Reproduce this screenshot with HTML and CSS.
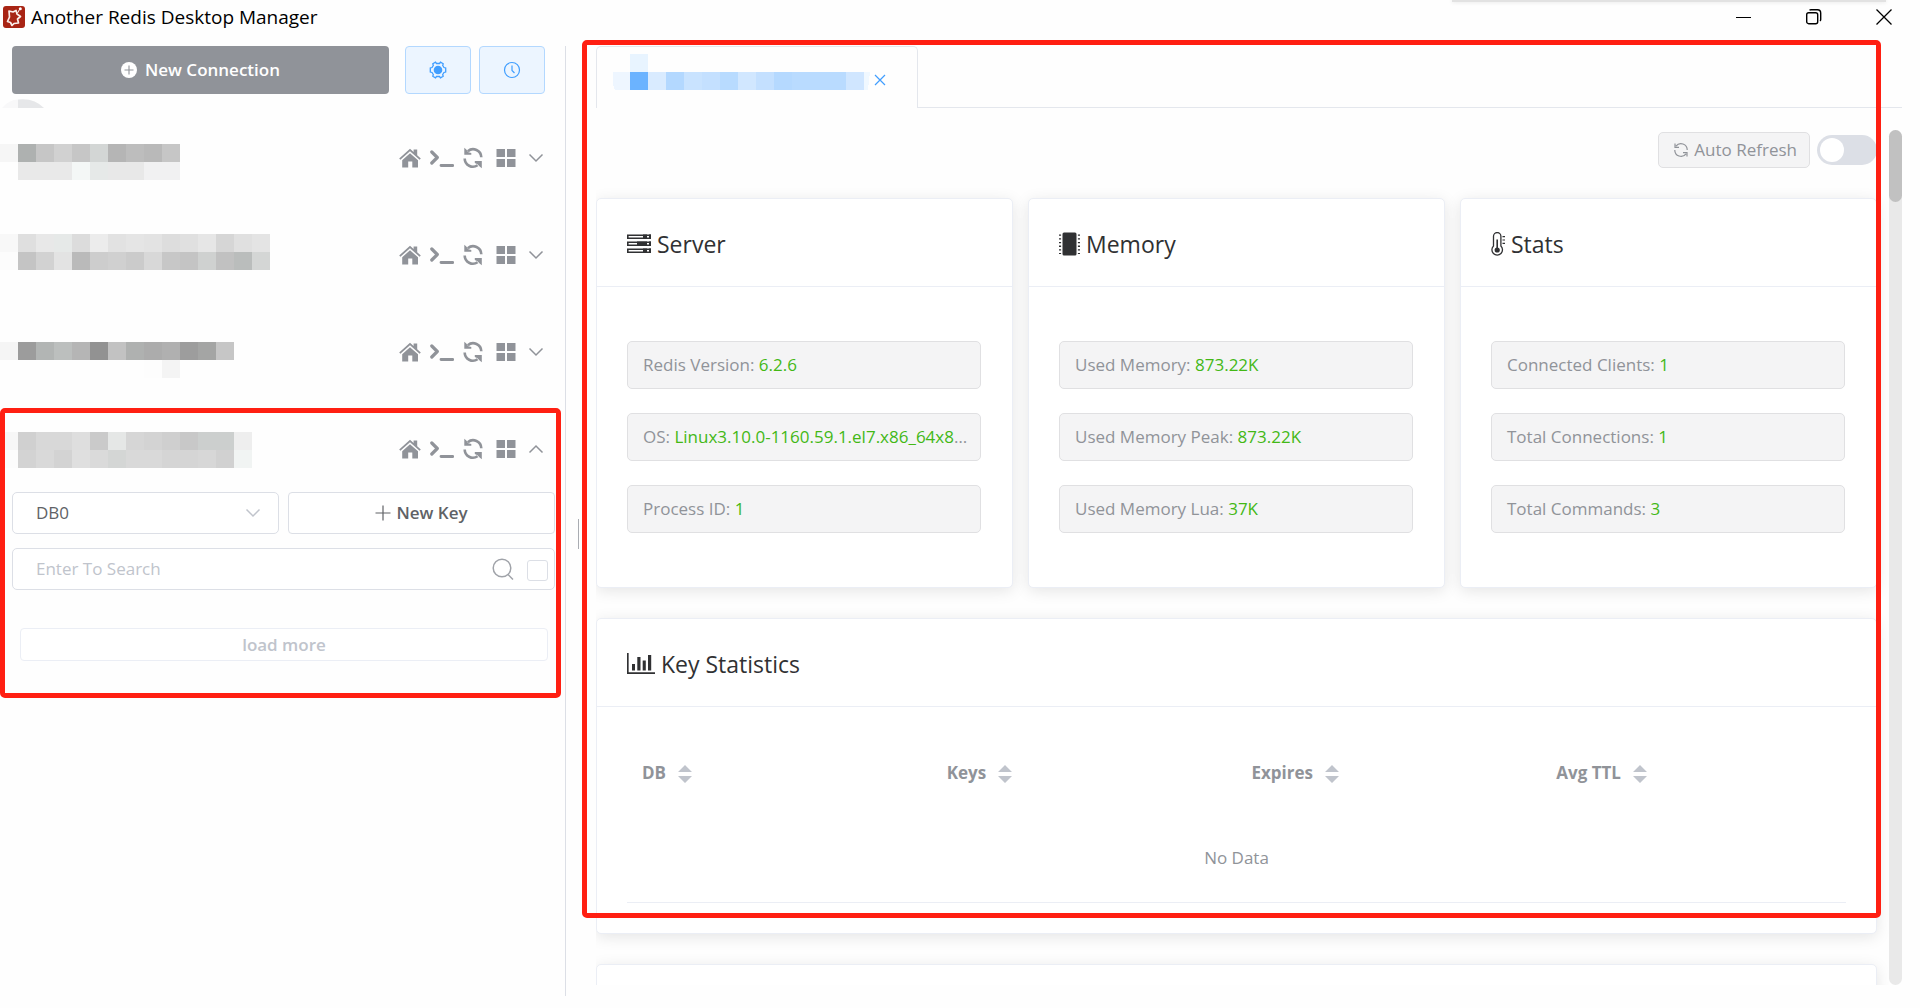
FILE: index.html
```html
<!DOCTYPE html>
<html lang="en">
<head>
<meta charset="utf-8">
<title>Another Redis Desktop Manager</title>
<link rel="stylesheet" href="styles.css">
</head>
<body>
<svg class="sprite" aria-hidden="true">
  <symbol id="i-home" viewBox="0 0 22 20">
    <path d="M11 .8 14.6 4V1.4h3.6v5.8l3.6 3.3-1.2 1.3L11 3.2 1.4 11.8.2 10.500z"/>
    <path d="M11 5.200 19 12.300V19.500H13.300V13.400H9.200V19.500H3.200V12.300z"/>
  </symbol>
  <symbol id="i-terminal" viewBox="0 0 24 20">
    <path d="M1.800 4 7.300 9.500 1.800 15" fill="none" stroke="currentColor" stroke-width="3.200" stroke-linecap="round" stroke-linejoin="round"/>
    <path d="M11 17.500H22.700" stroke="currentColor" stroke-width="2.800" stroke-linecap="round"/>
  </symbol>
  <symbol id="i-sync" viewBox="0 0 20 22">
    <g fill="none" stroke="currentColor" stroke-width="2.600">
      <path d="M4.800 4.200A8.200 8.200 0 0 1 18.300 10.300"/>
      <path d="M1.700 11.500A8.200 8.200 0 0 0 14.600 18.200"/>
    </g>
    <path d="M1.300.8V7.800H8.300V6L5.300 5.300 3.300 2.500zM18.800 21.300V14H11.800V16L14.500 17.300 16.600 19.500z"/>
  </symbol>
  <symbol id="i-grid" viewBox="0 0 20 20">
    <path d="M.5 1H9v8H.5zM11 1h8.500v8H11zM.5 11H9v8H.5zM11 11h8.500v8H11z"/>
  </symbol>
  <symbol id="i-down" viewBox="0 0 16 10">
    <path d="M1.500 1.500 8 8 14.500 1.500" fill="none" stroke="currentColor" stroke-width="1.500"/>
  </symbol>
  <symbol id="i-refresh" viewBox="0 0 16 16">
    <path d="M3 4.200A6.200 6.200 0 0 1 14.200 8M13 11.800A6.200 6.200 0 0 1 1.800 8M2 1.500V5.300H6M14 14.500V10.700H10" fill="none" stroke="currentColor" stroke-width="1.200"/>
  </symbol>
  <symbol id="i-sort" viewBox="0 0 14 18">
    <path d="M7 0 14 7H0zM7 18 0 11H14z"/>
  </symbol>
</svg>

<div class="app">
  <header class="titlebar">
    <svg class="logo" viewBox="0 0 22 22" aria-hidden="true">
      <rect width="22" height="22" rx="3" fill="#a82414"/>
      <path d="M6 5 10 6 13 4.500 14 8 17.500 10.500 14.500 13 15.500 17 11 17.500 9 19.500 7.500 16.500 4.500 15.500 6.500 11z" fill="none" stroke="#fbeeea" stroke-width="1.700" stroke-linejoin="round"/>
      <path d="M16.500 3.500 14.500 7" stroke="#fff" stroke-width="1"/>
      <circle cx="17.300" cy="2.800" r="1.500" fill="#fff"/>
    </svg>
    <h1 class="app-name">Another Redis Desktop Manager</h1>
    <div class="window-controls">
      <button type="button" aria-label="Minimize"><svg width="16" height="16" viewBox="0 0 16 16"><path d="M0 8.500H15" stroke="#000"/></svg></button>
      <button type="button" aria-label="Restore"><svg width="16" height="16" viewBox="0 0 16 16"><g fill="none" stroke="#000" stroke-width="1.400"><rect x=".7" y="3.700" width="11" height="11" rx="2"/><path d="M3.500 1.200C4 .8 4.500.7 5 .7h6.500a3.200 3.200 0 0 1 3.200 3.200V10.500c0 .6-.2 1.100-.6 1.500"/></g></svg></button>
      <button type="button" aria-label="Close"><svg width="16" height="16" viewBox="0 0 16 16"><path d="M.5.5l15 15M15.500.5l-15 15" stroke="#000" stroke-width="1.300"/></svg></button>
    </div>
    <span class="edge-shadow"></span>
  </header>

  <div class="workspace">
    <aside class="sidebar">
      <div class="toolbar">
        <button type="button" class="btn-connect">
          <svg width="16" height="16" viewBox="0 0 16 16"><circle cx="8" cy="8" r="8" fill="#fff"/><path d="M8 3.500v9M3.500 8h9" stroke="#909399" stroke-width="1.100"/></svg>
          New Connection
        </button>
        <button type="button" class="btn-tool" aria-label="Settings">
          <svg width="18" height="18" viewBox="0 0 18 18"><path d="M6.500 1.200 7.500 2.500h3l1-1.300 2.700 1.500-.5 1.800 1.300 2 1.700.5v4l-1.700.5-1.300 2 .5 1.800-2.700 1.500-1-1.300h-3l-1 1.300-2.700-1.500.5-1.800-1.300-2L1.300 11V7L3 6.500l1.300-2-.5-1.800z" fill="none" stroke="currentColor" stroke-width="1.300"/><circle cx="9" cy="9" r="4.300" fill="currentColor"/></svg>
        </button>
        <button type="button" class="btn-tool" aria-label="Command log">
          <svg width="18" height="18" viewBox="0 0 18 18"><g fill="none" stroke="currentColor" stroke-width="1.200"><circle cx="9" cy="9" r="7.500"/><path d="M9 4.500V9.500L11.500 12"/></g></svg>
        </button>
      </div>
      <svg class="peek" width="48" height="9" viewBox="0 0 48 9" aria-hidden="true">
        <path d="M2 9Q9 .5 18 .5V9z" fill="#f8f8f9"/><path d="M18 .5Q34-1.500 44 9H18z" fill="#e6e7e9"/>
      </svg>

      <ul class="connections">
        <li class="connection">
          <div class="conn-row">
            <svg class="mosaic" width="270" height="97" shape-rendering="crispEdges" aria-hidden="true">
              <path fill="#f6f6f6" d="M0 35h18v18H0z"/><path fill="#aeb1b0" d="M18 35h18v18H18z"/><path fill="#c6c6c6" d="M36 35h18v18H36z"/><path fill="#d1d1d1" d="M54 35h18v18H54z"/><path fill="#c6c6c6" d="M72 35h18v18H72z"/><path fill="#d3d6d5" d="M90 35h18v18H90z"/><path fill="#b5b5b5" d="M108 35h18v18h-18z"/><path fill="#bdbdbd" d="M126 35h18v18h-18z"/><path fill="#b9b9b9" d="M144 35h18v18h-18z"/><path fill="#c6c6c6" d="M162 35h18v18h-18z"/>
              <path fill="#e9e9e9" d="M18 53h54v18H18z"/><path fill="#f4f7f6" d="M72 53h18v18H72z"/><path fill="#e6e9e8" d="M90 53h18v18H90z"/><path fill="#e8e8e8" d="M108 53h36v18h-36z"/><path fill="#f1f1f2" d="M144 53h36v18h-36z"/>
            </svg>
            <div class="actions">
              <button type="button" aria-label="Home"><svg width="22" height="20"><use href="#i-home"/></svg></button>
              <button type="button" aria-label="Console"><svg width="24" height="20"><use href="#i-terminal"/></svg></button>
              <button type="button" aria-label="Refresh"><svg width="20" height="22"><use href="#i-sync"/></svg></button>
              <button type="button" aria-label="Menu"><svg width="20" height="20"><use href="#i-grid"/></svg></button>
              <button type="button" aria-label="Expand"><svg width="16" height="10"><use href="#i-down"/></svg></button>
            </div>
          </div>
        </li>
        <li class="connection">
          <div class="conn-row">
            <svg class="mosaic" width="270" height="97" shape-rendering="crispEdges" aria-hidden="true">
              <path fill="#f8f8f8" d="M0 28h18v18H0z"/><path fill="#dfdfdf" d="M18 28h18v18H18z"/><path fill="#e8e8e8" d="M36 28h18v18H36z"/><path fill="#e6e9e8" d="M54 28h18v18H54z"/><path fill="#dcdcdc" d="M72 28h18v18H72z"/><path fill="#ececec" d="M90 28h18v18H90z"/><path fill="#e2e2e2" d="M108 28h18v18h-18z"/><path fill="#e5e5e5" d="M126 28h18v18h-18z"/><path fill="#e3e3e3" d="M144 28h18v18h-18z"/><path fill="#dddddd" d="M162 28h18v18h-18z"/><path fill="#e0e0e0" d="M180 28h18v18h-18z"/><path fill="#e6e6e6" d="M198 28h18v18h-18z"/><path fill="#d6d6d6" d="M216 28h18v18h-18z"/><path fill="#e0e0e0" d="M234 28h18v18h-18z"/><path fill="#e4e4e4" d="M252 28h18v18h-18z"/>
              <path fill="#fcfcfc" d="M0 46h18v18H0z"/><path fill="#c4c4c4" d="M18 46h18v18H18z"/><path fill="#d2d2d2" d="M36 46h18v18H36z"/><path fill="#e3e3e3" d="M54 46h18v18H54z"/><path fill="#bababa" d="M72 46h18v18H72z"/><path fill="#cdcdcd" d="M90 46h18v18H90z"/><path fill="#d0d0d0" d="M108 46h18v18h-18z"/><path fill="#cbcbcb" d="M126 46h18v18h-18z"/><path fill="#d8d8d8" d="M144 46h18v18h-18z"/><path fill="#c7c7c7" d="M162 46h18v18h-18z"/><path fill="#c4c4c4" d="M180 46h18v18h-18z"/><path fill="#cfd1d0" d="M198 46h18v18h-18z"/><path fill="#c1c1c1" d="M216 46h18v18h-18z"/><path fill="#babdbc" d="M234 46h18v18h-18z"/><path fill="#d4d6d5" d="M252 46h18v18h-18z"/>
            </svg>
            <div class="actions">
              <button type="button" aria-label="Home"><svg width="22" height="20"><use href="#i-home"/></svg></button>
              <button type="button" aria-label="Console"><svg width="24" height="20"><use href="#i-terminal"/></svg></button>
              <button type="button" aria-label="Refresh"><svg width="20" height="22"><use href="#i-sync"/></svg></button>
              <button type="button" aria-label="Menu"><svg width="20" height="20"><use href="#i-grid"/></svg></button>
              <button type="button" aria-label="Expand"><svg width="16" height="10"><use href="#i-down"/></svg></button>
            </div>
          </div>
        </li>
        <li class="connection">
          <div class="conn-row">
            <svg class="mosaic" width="270" height="97" shape-rendering="crispEdges" aria-hidden="true">
              <path fill="#f5f5f5" d="M0 39h18v18H0z"/><path fill="#9c9c9c" d="M18 39h18v18H18z"/><path fill="#b2b5b4" d="M36 39h18v18H36z"/><path fill="#bcbfbe" d="M54 39h18v18H54z"/><path fill="#b5b5b5" d="M72 39h18v18H72z"/><path fill="#929292" d="M90 39h18v18H90z"/><path fill="#c2c2c2" d="M108 39h18v18h-18z"/><path fill="#afb1b0" d="M126 39h18v18h-18z"/><path fill="#acacac" d="M144 39h18v18h-18z"/><path fill="#b0b0b0" d="M162 39h18v18h-18z"/><path fill="#9d9d9d" d="M180 39h18v18h-18z"/><path fill="#a4a5a4" d="M198 39h18v18h-18z"/><path fill="#c6c6c6" d="M216 39h18v18h-18z"/>
              <path fill="#fdfdfd" d="M144 57h18v18h-18z"/><path fill="#f4f4f4" d="M162 57h18v18h-18z"/>
            </svg>
            <div class="actions">
              <button type="button" aria-label="Home"><svg width="22" height="20"><use href="#i-home"/></svg></button>
              <button type="button" aria-label="Console"><svg width="24" height="20"><use href="#i-terminal"/></svg></button>
              <button type="button" aria-label="Refresh"><svg width="20" height="22"><use href="#i-sync"/></svg></button>
              <button type="button" aria-label="Menu"><svg width="20" height="20"><use href="#i-grid"/></svg></button>
              <button type="button" aria-label="Expand"><svg width="16" height="10"><use href="#i-down"/></svg></button>
            </div>
          </div>
        </li>
        <li class="connection is-open">
          <div class="conn-row">
            <svg class="mosaic" width="270" height="97" shape-rendering="crispEdges" aria-hidden="true">
              <path fill="#f7f7f7" d="M0 32h18v18H0z"/><path fill="#d0d0d0" d="M18 32h18v18H18z"/><path fill="#d8d8d8" d="M36 32h36v18H36z"/><path fill="#dedede" d="M72 32h18v18H72z"/><path fill="#cacaca" d="M90 32h18v18H90z"/><path fill="#e5e7e6" d="M108 32h18v18h-18z"/><path fill="#d6d6d6" d="M126 32h18v18h-18z"/><path fill="#d3d3d3" d="M144 32h18v18h-18z"/><path fill="#cfcfcf" d="M162 32h18v18h-18z"/><path fill="#c8c8c8" d="M180 32h18v18h-18z"/><path fill="#cccfce" d="M198 32h36v18h-36z"/><path fill="#eeeeee" d="M234 32h18v18h-18z"/>
              <path fill="#fcfcfc" d="M0 50h18v18H0z"/><path fill="#d3d3d3" d="M18 50h18v18H18z"/><path fill="#d9d9d9" d="M36 50h18v18H36z"/><path fill="#d3d3d3" d="M54 50h18v18H54z"/><path fill="#dfdfdf" d="M72 50h18v18H72z"/><path fill="#dadada" d="M90 50h18v18H90z"/><path fill="#d4d6d5" d="M108 50h18v18h-18z"/><path fill="#d9d9d9" d="M126 50h36v18h-36z"/><path fill="#d5d5d5" d="M162 50h36v18h-36z"/><path fill="#d7d7d7" d="M198 50h18v18h-18z"/><path fill="#d1d1d1" d="M216 50h18v18h-18z"/><path fill="#f1f4f3" d="M234 50h18v18h-18z"/>
            </svg>
            <div class="actions">
              <button type="button" aria-label="Home"><svg width="22" height="20"><use href="#i-home"/></svg></button>
              <button type="button" aria-label="Console"><svg width="24" height="20"><use href="#i-terminal"/></svg></button>
              <button type="button" aria-label="Refresh"><svg width="20" height="22"><use href="#i-sync"/></svg></button>
              <button type="button" aria-label="Menu"><svg width="20" height="20"><use href="#i-grid"/></svg></button>
              <button type="button" aria-label="Collapse"><svg class="flip" width="16" height="10"><use href="#i-down"/></svg></button>
            </div>
          </div>
          <div class="conn-body">
            <div class="db-row">
              <div class="select-wrap">
                <select aria-label="Database"><option>DB0</option></select>
                <svg width="16" height="10" aria-hidden="true"><use href="#i-down"/></svg>
              </div>
              <button type="button" class="btn-key"><svg width="16" height="16" viewBox="0 0 16 16"><path d="M8 .5v15M.5 8h15" stroke="#606266" stroke-width="1.200"/></svg>New Key</button>
            </div>
            <div class="search">
              <input type="text" placeholder="Enter To Search" aria-label="Search keys">
              <svg width="22" height="22" viewBox="0 0 22 22" aria-hidden="true"><g fill="none" stroke="#a0a3a9" stroke-width="1.500"><circle cx="10" cy="10" r="8.800"/><path d="M16 16.500 21 21.500"/></g></svg>
              <input type="checkbox" aria-label="Exact search">
            </div>
            <button type="button" class="btn-more" disabled>load more</button>
          </div>
          <span class="mark"></span>
        </li>
      </ul>
    </aside>

    <main class="main">
      <span class="resizer"></span>
      <nav class="tabs">
        <div class="tab">
          <svg width="258" height="61" viewBox="0 1 258 61" shape-rendering="crispEdges" aria-hidden="true">
            <path fill="#e8f4ff" d="M17 8h18v18H17z"/>
            <path fill="#eef6ff" d="M0 26h17v18H2L0 38z"/><path fill="#6bb3ff" d="M17 26h18v18H17z"/><path fill="#d9ebff" d="M35 26h18v18H35z"/><path fill="#b3d8ff" d="M53 26h18v18H53z"/><path fill="#c9e3ff" d="M71 26h18v18H71z"/><path fill="#c4e0ff" d="M89 26h18v18H89z"/><path fill="#b8dbff" d="M107 26h18v18h-18z"/><path fill="#d1e7ff" d="M125 26h18v18h-18z"/><path fill="#c4e0ff" d="M143 26h18v18h-18z"/><path fill="#b5d9ff" d="M161 26h18v18h-18z"/><path fill="#b9dbff" d="M179 26h54v18h-54z"/><path fill="#d0e6ff" d="M233 26h18v18h-18z"/><path fill="#f0f8ff" d="M251 26h6l-2 18h-4z"/>
          </svg>
          <button type="button" aria-label="Close tab"><svg width="12" height="12" viewBox="0 0 12 12"><path d="M1 1l10 10M11 1 1 11" stroke="currentColor" stroke-width="1.200"/></svg></button>
        </div>
        <div class="tabs-rest"></div>
      </nav>

      <div class="content">
        <div class="scroll">
          <div class="refresh-bar">
            <label class="refresh-tag" for="auto"><svg width="16" height="16"><use href="#i-refresh"/></svg>Auto Refresh</label>
            <input id="auto" class="switch" type="checkbox" role="switch">
          </div>

          <div class="cards">
            <section class="card">
              <h2><svg width="24" height="20" viewBox="0 0 24 20"><g fill="none" stroke="currentColor" stroke-width="1.600"><path d="M.8 1.300h22.400v3H.8zM.8 8.300h22.400v3H.8zM.8 15.300h22.400v3H.8z"/></g><path d="M16 .5h4v4.500h-4zM22 .5h2v4.500h-2zM10 7.500h10V12H10zM22 7.500h2V12h-2zM16 14.500h4V19h-4zM22 14.500h2V19h-2z"/></svg>Server</h2>
              <div class="card-body">
                <p class="tag">Redis Version: <span>6.2.6</span></p>
                <p class="tag">OS: <span>Linux3.10.0-1160.59.1.el7.x86_64x86_64</span></p>
                <p class="tag">Process ID: <span>1</span></p>
              </div>
            </section>
            <section class="card">
              <h2><svg width="21" height="24" viewBox="0 0 21 24"><rect x="3.500" y=".5" width="14" height="23" rx="1.500"/><path d="M1 2.500V22M20 2.500V22" stroke="currentColor" stroke-width="2.200" stroke-dasharray="1.300 2.400"/></svg>Memory</h2>
              <div class="card-body">
                <p class="tag">Used Memory: <span>873.22K</span></p>
                <p class="tag">Used Memory Peak: <span>873.22K</span></p>
                <p class="tag">Used Memory Lua: <span>37K</span></p>
              </div>
            </section>
            <section class="card">
              <h2><svg width="14" height="24" viewBox="0 0 14 24"><path d="M2.500 14V4.200a3.700 3.700 0 0 1 7.400 0V14a5.300 5.300 0 1 1-7.400 0z" fill="none" stroke="currentColor" stroke-width="1.300"/><circle cx="6.200" cy="18" r="2.600"/><path d="M6.200 7.500V18" stroke="currentColor" stroke-width="1.600"/><path d="M11.500 4.700H14M11.500 8H14M11.500 11.300H14" stroke="currentColor" stroke-width="1.200"/></svg>Stats</h2>
              <div class="card-body">
                <p class="tag">Connected Clients: <span>1</span></p>
                <p class="tag">Total Connections: <span>1</span></p>
                <p class="tag">Total Commands: <span>3</span></p>
              </div>
            </section>
          </div>

          <section class="card">
            <h2><svg width="28" height="22" viewBox="0 0 28 22"><path d="M.8 0V20.200H28" fill="none" stroke="currentColor" stroke-width="1.700"/><path d="M5 11h3v6.500H5zM10.300 4h3.200v13.500h-3.200zM15.700 7.500h3.100v10h-3.100zM21 2h3.200v15.500H21z"/></svg>Key Statistics</h2>
            <div class="table-wrap">
              <table>
                <thead>
                  <tr>
                    <th scope="col">DB<svg width="14" height="18"><use href="#i-sort"/></svg></th>
                    <th scope="col">Keys<svg width="14" height="18"><use href="#i-sort"/></svg></th>
                    <th scope="col">Expires<svg width="14" height="18"><use href="#i-sort"/></svg></th>
                    <th scope="col">Avg TTL<svg width="14" height="18"><use href="#i-sort"/></svg></th>
                  </tr>
                </thead>
                <tbody>
                  <tr><td colspan="4">No Data</td></tr>
                </tbody>
              </table>
            </div>
          </section>

          <section class="card card-next"></section>
        </div>
        <div class="scrollbar"><div class="thumb"></div></div>
      </div>
      <span class="mark"></span>
    </main>
  </div>
</div>
</body>
</html>
```
FILE: styles.css
```css
* { box-sizing: border-box; }

body {
  margin: 0;
  background: #fefefe;
  color: #303133;
  font: 17px/24px "Open Sans", "Noto Sans", sans-serif;
}

button, input, select { font: inherit; color: inherit; }
button { margin: 0; padding: 0; border: 0; background: none; }
svg { display: block; flex: none; fill: currentColor; }
h1, h2, p, ul { margin: 0; padding: 0; }
.sprite { position: absolute; width: 0; height: 0; }

.app { display: flex; flex-direction: column; height: 100vh; overflow: hidden; }

/* window title bar */
.titlebar { position: relative; display: flex; align-items: center; gap: 6px; height: 34px; padding: 0 28px 0 3px; margin-bottom: 12px; }
.logo { width: 22px; height: 22px; }
.app-name { flex: 1; font-size: 19px; font-weight: 400; color: #000; }
.window-controls { display: flex; gap: 54px; }
.edge-shadow { position: absolute; top: 0; right: 34px; width: 434px; height: 2px; background: #e2e2e2; box-shadow: 0 0 4px #dcdcdc; }

.workspace { display: flex; flex: 1; min-height: 0; }

/* sidebar */
.sidebar { width: 566px; flex: none; margin-bottom: 12px; border-right: 1px solid #dcdfe6; }
.toolbar { display: flex; gap: 8px; padding: 0 20px 0 12px; }
.btn-connect { display: flex; flex: 1; align-items: center; justify-content: center; gap: 8px; height: 48px; margin-right: 8px; border-radius: 4px; background: #909399; color: #fff; font-weight: 600; }
.btn-tool { display: flex; align-items: center; justify-content: center; width: 66px; height: 48px; border: 1px solid #b3d8ff; border-radius: 4px; background: #ecf5ff; color: #409eff; }
.peek { margin: 5px 0 1px; }

.connections { list-style: none; }
.connection { position: relative; }
.conn-row { display: flex; align-items: center; justify-content: space-between; height: 97px; padding-right: 21px; color: #909399; }
.actions { display: flex; align-items: center; }
.actions button + button { margin-left: 9px; }
.actions button:nth-child(4) { margin-left: 13px; }
.actions button:nth-child(5) { margin-left: 12px; }
.flip { transform: rotate(180deg); }

.conn-body { padding: 0 10px 37px 12px; margin-top: -5px; }
.db-row { display: grid; grid-template-columns: 1fr 1fr; gap: 9px; }
.select-wrap { position: relative; color: #c0c4cc; }
.select-wrap select { width: 100%; height: 42px; padding: 0 23px; border: 1px solid #dcdfe6; border-radius: 5px; background: #fff; color: #606266; appearance: none; }
.select-wrap svg { position: absolute; top: 16px; right: 18px; pointer-events: none; }
.btn-key { display: flex; align-items: center; justify-content: center; gap: 5px; height: 42px; border: 1px solid #dcdfe6; border-radius: 4px; background: #fff; color: #606266; font-weight: 600; }
.search { display: flex; align-items: center; height: 42px; margin-top: 14px; padding: 0 6px 0 23px; border: 1px solid #dcdfe6; border-radius: 5px; background: #fff; }
.search input[type="text"] { flex: 1; min-width: 0; padding: 0; border: 0; background: none; outline: none; }
.search input::placeholder { color: #c0c4cc; opacity: 1; }
.search input[type="checkbox"] { width: 21px; height: 21px; margin: 3px 0 0 13px; border: 1px solid #dcdfe6; border-radius: 3px; background: #fff; appearance: none; }
.btn-more { display: block; width: calc(100% - 15px); height: 33px; margin: 38px 0 0 8px; border: 1px solid #ebeef5; border-radius: 4px; background: #fff; color: #c0c4cc; font-weight: 600; }

/* red highlight frames */
.mark { position: absolute; border: 5px solid #ff1f12; border-radius: 5px; pointer-events: none; }
.sidebar .mark { inset: 8px 4px 0 0; }
.main > .mark { inset: -6px 39px 90px 16px; }

/* main pane */
.main { position: relative; display: flex; flex: 1; flex-direction: column; min-width: 0; padding: 0 18px 23px 30px; }
.resizer { position: absolute; top: 473px; left: 12px; width: 1px; height: 30px; background: #a9acb2; }
.tabs { display: flex; height: 62px; }
.tab { display: flex; align-items: center; gap: 3px; padding: 0 31px 0 16px; border: 1px solid #e4e7ed; border-bottom: 0; border-radius: 5px 5px 0 0; color: #409eff; }
.tab button { margin-top: 4px; }
.tabs-rest { flex: 1; border-bottom: 1px solid #e4e7ed; }

.content { display: flex; flex: 1; min-height: 0; }
.scroll { display: flex; flex: 1; flex-direction: column; gap: 30px; min-width: 0; padding: 24px 12px 0 0; overflow: hidden; }
.scrollbar { width: 13px; margin-top: 22px; border-radius: 7px; background: #e9e9e9; }
.thumb { height: 72px; border-radius: 7px; background: #c1c1c1; }

.refresh-bar { display: flex; align-items: center; justify-content: flex-end; gap: 7px; }
.refresh-tag { display: flex; align-items: center; gap: 5px; height: 36px; padding: 0 12px 0 14px; border: 1px solid #e0e0e2; border-radius: 5px; background: #f4f4f5; color: #909399; }
.switch { position: relative; width: 60px; height: 30px; margin: 0; border-radius: 15px; background: #dcdfe6; appearance: none; }
.switch::before { content: ""; position: absolute; top: 3px; left: 3px; width: 24px; height: 24px; border-radius: 50%; background: #fff; }

.cards { display: grid; grid-template-columns: repeat(3, minmax(0, 1fr)); gap: 15px; }
.card { flex: none; border: 1px solid #ebeef5; border-radius: 5px; background: #fff; box-shadow: 0 3px 15px rgba(0, 0, 0, .1); }
.card h2 { display: flex; align-items: center; gap: 6px; height: 88px; padding: 2px 30px 0; border-bottom: 1px solid #ebeef5; font-size: 23px; font-weight: 400; }
.card-body { display: grid; gap: 24px; padding: 54px 31px 54px 30px; }
.tag { height: 48px; padding: 0 9px 0 15px; border: 1px solid #e0e0e2; border-radius: 5px; background: #f4f4f5; color: #909399; line-height: 46px; overflow: hidden; white-space: nowrap; text-overflow: ellipsis; }
.tag span { color: #43b815; }

.table-wrap { padding: 30px; }
table { width: 100%; border-collapse: collapse; border-bottom: 1px solid #ebeef5; table-layout: fixed; color: #909399; }
th { height: 72px; padding: 0 15px; font-weight: 700; text-align: left; }
th svg { display: inline-block; margin-left: 12px; color: #c0c4cc; vertical-align: -4px; }
td { height: 93px; padding: 6px 0 0; text-align: center; }
.card-next { height: 240px; }
```
